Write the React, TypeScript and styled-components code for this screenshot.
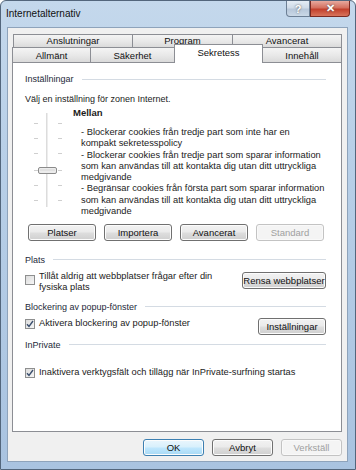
import styled, { createGlobalStyle } from "styled-components";

const GlobalStyle = createGlobalStyle`
  html, body {
    margin: 0;
    padding: 0;
    background: #ffffff;
  }
  body {
    font-family: "Liberation Sans", Arial, sans-serif;
    font-size: 9px;
    color: #1b1b1b;
  }
`;

const Window = styled.div`
  width: 356px;
  height: 470px;
  box-sizing: border-box;
  display: flex;
  flex-direction: column;
  border: 1px solid #53667c;
  border-radius: 6px 6px 0 0;
  background: linear-gradient(180deg, #c4d8ec 0%, #b9d0e8 30%, #a9c3e0 100%);
  overflow: hidden;
`;

const TitleBar = styled.div`
  height: 26px;
  display: flex;
  align-items: flex-start;
  justify-content: space-between;
  padding-left: 5px;
`;

const Title = styled.div`
  margin-top: 7px;
  font-size: 10px;
  color: #111;
`;

const Caption = styled.div`
  display: flex;
  margin-right: 5px;
`;

const CaptionButton = styled.div<{ $close?: boolean }>`
  width: ${(p) => (p.$close ? 40 : 24)}px;
  height: 16px;
  box-sizing: border-box;
  display: flex;
  align-items: center;
  justify-content: center;
  border: 1px solid ${(p) => (p.$close ? "#7a2a22" : "#6c7f95")};
  border-top: none;
  border-radius: ${(p) => (p.$close ? "0 0 4px 0" : "0 0 0 4px")};
  background: ${(p) =>
    p.$close
      ? "linear-gradient(180deg, #e7a99e 0%, #d4705f 45%, #c2402c 55%, #d8745c 100%)"
      : "linear-gradient(180deg, #e4ecf5 0%, #cfdbe8 45%, #b7c7da 55%, #cad8e7 100%)"};
  color: #fff;
  font-size: 11px;
  font-weight: bold;
  text-shadow: 0 0 2px #4a4a4a;
`;

const Client = styled.div`
  flex: 1;
  margin: 0 7px 7px 6px;
  background: #f0f0f0;
  border: 1px solid #8ea3bb;
  padding: 6px 5px 0 4px;
  display: flex;
  flex-direction: column;
`;

const TabRow = styled.div<{ $indent?: number }>`
  display: flex;
  align-items: flex-end;
  padding-left: ${(p) => p.$indent || 0}px;
`;

// $top: tabs of the back row, whose bottom border is shared with the front row
const Tab = styled.div<{ $w: number; $active?: boolean; $first?: boolean; $top?: boolean }>`
  width: ${(p) => p.$w}px;
  height: ${(p) => (p.$active ? 19 : p.$top ? 14 : 15)}px;
  margin-top: ${(p) => (p.$active ? -4 : 0)}px;
  margin-bottom: ${(p) => (p.$active || p.$top ? -1 : 0)}px;
  margin-left: ${(p) => (p.$first ? 0 : -1)}px;
  z-index: ${(p) => (p.$active ? 2 : 1)};
  box-sizing: border-box;
  display: flex;
  align-items: center;
  justify-content: center;
  padding-bottom: ${(p) => (p.$active ? 3 : p.$top ? 1 : 0)}px;
  border: 1px solid #8c8e94;
  border-bottom: ${(p) => (p.$top ? "1px solid #8c8e94" : "none")};
  background: ${(p) =>
    p.$active ? "#ffffff" : "linear-gradient(180deg, #f4f4f4 0%, #e9e9e9 50%, #dadada 100%)"};
  font-size: 9.5px;
  line-height: 11px;
  color: #111;
`;

const Panel = styled.div`
  height: 370px;
  box-sizing: border-box;
  background: #ffffff;
  border: 1px solid #8c8e94;
  padding: 10px 15px 0 12px;
  display: flex;
  flex-direction: column;
`;

const GroupHeader = styled.div<{ $gap?: number }>`
  display: flex;
  align-items: center;
  gap: 8px;
  height: 12px;
  margin-top: ${(p) => p.$gap || 0}px;
  color: #1e2a3a;

  &::after {
    content: "";
    flex: 1;
    height: 1px;
    background: #d4dbe3;
  }
`;

const Text = styled.div<{ $gap?: number }>`
  line-height: 12px;
  margin-top: ${(p) => p.$gap || 0}px;
`;

const LevelArea = styled.div`
  display: flex;
  margin-top: 2px;
`;

const Description = styled.div`
  flex: 1;
  min-width: 0;
`;

const LevelName = styled.div`
  font-weight: bold;
  line-height: 12px;
  font-size: 9.5px;
`;

const Bullets = styled.div`
  margin-top: 8px;
  padding-left: 8px;
  line-height: 11.3px;
  font-size: 9.3px;
  white-space: nowrap;
`;

const ButtonRow = styled.div`
  display: grid;
  grid-template-columns: repeat(4, 68px);
  gap: 8px;
  padding-left: 3px;
  margin-top: 6.5px;
`;

const Button = styled.div<{ $disabled?: boolean; $default?: boolean; $w?: number; $top?: number }>`
  height: 17px;
  width: ${(p) => (p.$w ? `${p.$w}px` : "auto")};
  margin-top: ${(p) => p.$top || 0}px;
  box-sizing: border-box;
  display: flex;
  align-items: center;
  justify-content: center;
  border-radius: 3px;
  border: 1px solid
    ${(p) => (p.$default ? "#3c7fb1" : p.$disabled ? "#c3c3c3" : "#707070")};
  background: ${(p) =>
    p.$disabled
      ? "#f4f4f4"
      : p.$default
      ? "linear-gradient(180deg, #eaf6fd 0%, #d9f0fc 45%, #bee6fd 55%, #a7d9f5 100%)"
      : "linear-gradient(180deg, #f2f2f2 0%, #ebebeb 45%, #dddddd 55%, #cfcfcf 100%)"};
  box-shadow: inset 0 0 0 1px ${(p) => (p.$disabled ? "#f9f9f9" : "#fcfcfc")};
  color: ${(p) => (p.$disabled ? "#a0a0a0" : "#111")};
  font-size: 9.5px;
  white-space: nowrap;
`;

const OptionRow = styled.div<{ $gap?: number }>`
  display: flex;
  align-items: flex-start;
  justify-content: space-between;
  margin-top: ${(p) => p.$gap || 0}px;
`;

const CheckLabel = styled.div`
  display: flex;
  align-items: flex-start;
  gap: 4px;
  line-height: 11px;
  font-size: 9.3px;
  white-space: nowrap;
`;

const Box = styled.div<{ $offset: number }>`
  width: 10px;
  height: 10px;
  flex: none;
  box-sizing: border-box;
  margin-top: ${(p) => p.$offset}px;
  border: 1px solid #8e8f8f;
  background: linear-gradient(135deg, #dcdcdc 0%, #f6f6f6 100%);
  display: flex;
  align-items: center;
  justify-content: center;
`;

const Footer = styled.div`
  display: flex;
  justify-content: flex-end;
  gap: 8px;
  margin-top: 7px;
`;

const CheckBox = ({ checked, offset = 1 }: { checked?: boolean; offset?: number }) => (
  <Box $offset={offset}>
    {checked && (
      <svg width="8" height="8" viewBox="0 0 8 8">
        <path d="M1 4.2 L3 6.5 L7 1" fill="none" stroke="#3b4f6e" strokeWidth="1.4" />
      </svg>
    )}
  </Box>
);

const PrivacySlider = () => {
  const ticks = [16, 31, 46, 63, 78, 93];
  return (
    <svg width="48" height="104" viewBox="0 0 48 104" style={{ flex: "none" }}>
      <line x1="22" y1="6" x2="22" y2="100" stroke="#b8b8b8" strokeWidth="1" />
      <line x1="23" y1="6" x2="23" y2="100" stroke="#ffffff" strokeWidth="1" />
      {ticks.map((y) => (
        <g key={y}>
          <line x1="9" y1={y + 0.5} x2="13" y2={y + 0.5} stroke="#cfcfcf" />
          <line x1="33" y1={y + 0.5} x2="37" y2={y + 0.5} stroke="#cfcfcf" />
        </g>
      ))}
      <rect x="13.5" y="60.5" width="18" height="6" rx="1.5" fill="#ececec" stroke="#8b8b8b" />
      <line x1="15" y1="63" x2="30" y2="63" stroke="#d6d6d6" />
    </svg>
  );
};

export default function App() {
  return (
    <>
      <GlobalStyle />
      <Window>
        <TitleBar>
          <Title>Internetalternativ</Title>
          <Caption>
            <CaptionButton>?</CaptionButton>
            <CaptionButton $close>✕</CaptionButton>
          </Caption>
        </TitleBar>
        <Client>
          <TabRow $indent={1}>
            <Tab $w={120} $first $top>Anslutningar</Tab>
            <Tab $w={101} $top>Program</Tab>
            <Tab $w={110} $top>Avancerat</Tab>
          </TabRow>
          <TabRow>
            <Tab $w={79} $first>Allmänt</Tab>
            <Tab $w={85}>Säkerhet</Tab>
            <Tab $w={89} $active>Sekretess</Tab>
            <Tab $w={80}>Innehåll</Tab>
          </TabRow>
          <Panel>
            <GroupHeader>Inställningar</GroupHeader>
            <Text $gap={8}>Välj en inställning för zonen Internet.</Text>
            <LevelArea>
              <PrivacySlider />
              <Description>
                <LevelName>Mellan</LevelName>
                <Bullets>
                  <div>- Blockerar cookies från tredje part som inte har en</div>
                  <div>kompakt sekretesspolicy</div>
                  <div>- Blockerar cookies från tredje part som sparar information</div>
                  <div>som kan användas till att kontakta dig utan ditt uttryckliga</div>
                  <div>medgivande</div>
                  <div>- Begränsar cookies från första part som sparar information</div>
                  <div>som kan användas till att kontakta dig utan ditt uttryckliga</div>
                  <div>medgivande</div>
                </Bullets>
              </Description>
            </LevelArea>
            <ButtonRow>
              <Button>Platser</Button>
              <Button>Importera</Button>
              <Button>Avancerat</Button>
              <Button $disabled>Standard</Button>
            </ButtonRow>
            <GroupHeader $gap={13}>Plats</GroupHeader>
            <OptionRow $gap={5}>
              <CheckLabel>
                <CheckBox offset={4} />
                <div>
                  Tillåt aldrig att webbplatser frågar efter din
                  <br />
                  fysiska plats
                </div>
              </CheckLabel>
              <Button $w={84} $top={1}>Rensa webbplatser</Button>
            </OptionRow>
            <GroupHeader $gap={8}>Blockering av popup-fönster</GroupHeader>
            <OptionRow $gap={5}>
              <CheckLabel>
                <CheckBox checked />
                <div>Aktivera blockering av popup-fönster</div>
              </CheckLabel>
              <Button $w={68}>Inställningar</Button>
            </OptionRow>
            <GroupHeader $gap={4}>InPrivate</GroupHeader>
            <OptionRow $gap={16}>
              <CheckLabel>
                <CheckBox checked />
                <div>Inaktivera verktygsfält och tillägg när InPrivate-surfning startas</div>
              </CheckLabel>
            </OptionRow>
          </Panel>
          <Footer>
            <Button $w={61} $default>OK</Button>
            <Button $w={61}>Avbryt</Button>
            <Button $w={61} $disabled>Verkställ</Button>
          </Footer>
        </Client>
      </Window>
    </>
  );
}
